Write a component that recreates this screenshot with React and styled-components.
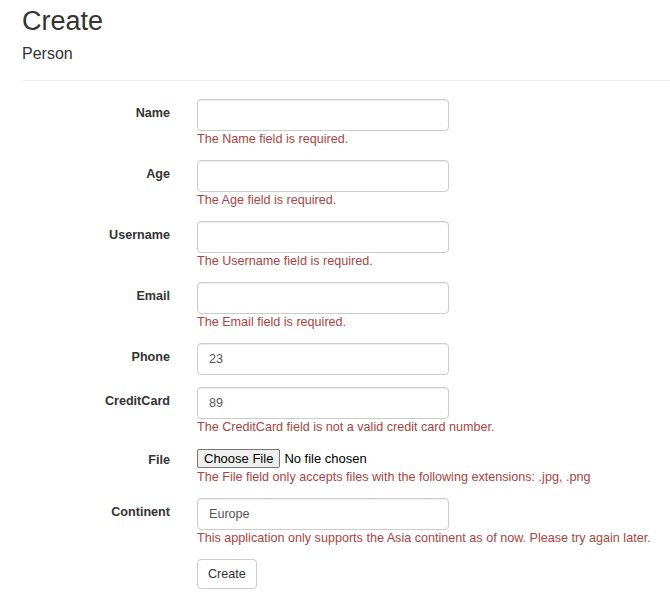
import React from 'react'
import styled, { createGlobalStyle } from 'styled-components'

const GlobalStyle = createGlobalStyle`
  body {
    margin: 0;
    background: #fff;
    font-family: "Liberation Sans", Arial, sans-serif;
    font-size: 12.6px;
    color: #333;
  }
`

const fields = [
  { label: 'Name', value: '', error: 'The Name field is required.' },
  { label: 'Age', value: '', error: 'The Age field is required.' },
  { label: 'Username', value: '', error: 'The Username field is required.' },
  { label: 'Email', value: '', error: 'The Email field is required.' },
  { label: 'Phone', value: '23' },
  { label: 'CreditCard', value: '89', error: 'The CreditCard field is not a valid credit card number.' },
  { label: 'File', file: true, error: 'The File field only accepts files with the following extensions: .jpg, .png' },
  { label: 'Continent', value: 'Europe', error: 'This application only supports the Asia continent as of now. Please try again later.' },
]

const App = () => {
  return (
    <Page>
      <GlobalStyle />
      <Title>Create</Title>
      <SubTitle>Person</SubTitle>
      <Rule />
      <Form>
        {fields.map((f) => (
          <Row key={f.label}>
            <Label file={f.file}>{f.label}</Label>
            <Control>
              {f.file ? (
                <FileBox>
                  <FileButton type="button">Choose File</FileButton>
                  <FileText>No file chosen</FileText>
                </FileBox>
              ) : (
                <Input type="text" defaultValue={f.value} />
              )}
              {f.error && <Error>{f.error}</Error>}
            </Control>
          </Row>
        ))}
        <Row>
          <span />
          <Control>
            <SubmitButton type="button">Create</SubmitButton>
          </Control>
        </Row>
      </Form>
    </Page>
  )
}

const Page = styled.div`
  padding: 0 0 0 22px;
  overflow: hidden;
`
const Title = styled.h2`
  margin: 7px 0 0;
  font-size: 27px;
  font-weight: 500;
  line-height: 1.1;
`
const SubTitle = styled.h4`
  margin: 8px 0 0;
  font-size: 16px;
  font-weight: 500;
  line-height: 1.1;
`
const Rule = styled.hr`
  margin: 18px 0 0;
  border: 0;
  border-top: 1px solid #eee;
`
const Form = styled.form`
  display: flex;
  flex-direction: column;
  gap: 12px;
  padding-top: 18px;
`
const Row = styled.div`
  display: grid;
  grid-template-columns: 148px 1fr;
  column-gap: 27px;
`
const Label = styled.label`
  text-align: right;
  font-weight: bold;
  padding-top: ${(p) => (p.file ? '3px' : '5px')};
  line-height: 18px;
`
const Control = styled.div`
  display: flex;
  flex-direction: column;
  align-items: flex-start;
`
const Input = styled.input`
  box-sizing: border-box;
  width: 252px;
  height: 32px;
  padding: 5px 11px;
  font-family: inherit;
  font-size: 12.6px;
  color: #555;
  border: 1px solid #ccc;
  border-radius: 4px;
  box-shadow: inset 0 1px 1px rgba(0, 0, 0, 0.075);
  outline: none;
`
const Error = styled.span`
  color: #a94442;
  line-height: 17px;
`
const FileBox = styled.div`
  display: flex;
  align-items: center;
  gap: 4px;
  height: 21px;
`
const FileButton = styled.button`
  font-family: "Liberation Sans", Arial, sans-serif;
  font-size: 13px;
  padding: 1px 6px;
  background: #efefef;
  border: 1px solid #767676;
  border-radius: 2px;
  color: #000;
`
const FileText = styled.span`
  font-size: 13px;
  color: #000;
`
const SubmitButton = styled.button`
  box-sizing: border-box;
  height: 30px;
  padding: 0 10px;
  font-family: inherit;
  font-size: 12.6px;
  color: #333;
  background: #fff;
  border: 1px solid #ccc;
  border-radius: 4px;
`

export default App
